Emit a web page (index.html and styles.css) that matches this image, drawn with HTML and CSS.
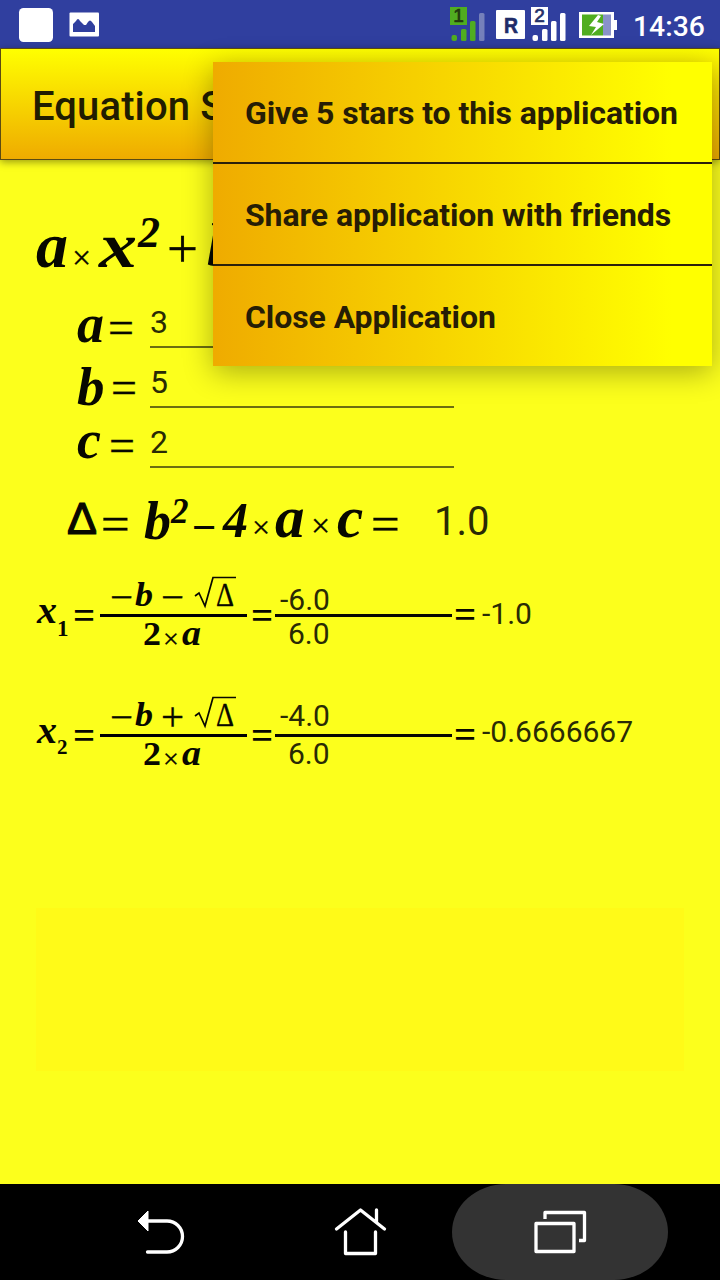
FILE: index.html
```html
<!DOCTYPE html>
<html lang="en">
<head>
<meta charset="utf-8">
<title>Equation Solver</title>
<link rel="stylesheet" href="styles.css">
</head>
<body>
<div class="screen">
  <header class="status">
    <svg class="status-left" width="110" height="48" viewBox="0 0 110 48">
      <rect x="19" y="8" width="34" height="34" rx="4.5" fill="#fff"/>
      <rect x="69.5" y="12.5" width="29.5" height="24" rx="1" fill="#fff"/>
      <path d="M73 32V24L76 21Q78 17 80 21L84 25H86L88 22Q90 19 92 22L95 26V32Z" fill="#303f9f"/>
    </svg>
    <svg class="status-right" width="180" height="48" viewBox="445 0 180 48">
      <rect x="450" y="7" width="17" height="18" fill="#50ad20"/>
      <text class="sim" x="458.5" y="22" fill="#22390f" stroke="#22390f">1</text>
      <g fill="#50ad20"><rect x="451.500" y="35" width="5.500" height="6" rx="2"/><rect x="461" y="29" width="5.500" height="12" rx="1.500"/><rect x="470" y="21" width="5.500" height="20" rx="1.500"/></g>
      <rect x="479" y="13" width="5.500" height="28" rx="1.500" fill="#7580ba"/>
      <rect x="496" y="10" width="29" height="29" rx="1" fill="#fff"/>
      <text class="roam" x="511" y="32.500" textLength="14" lengthAdjust="spacingAndGlyphs">R</text>
      <rect x="531" y="7" width="17" height="18" fill="#fff"/>
      <text class="sim" x="539.500" y="22" fill="#253169" stroke="#253169">2</text>
      <g fill="#fff"><rect x="532.500" y="35" width="5.500" height="6" rx="2"/><rect x="542" y="29" width="5.500" height="12" rx="1.500"/><rect x="551" y="21" width="5.500" height="20" rx="1.500"/><rect x="560" y="13" width="5.500" height="28" rx="1.500"/></g>
      <path d="M579 12H614V20H617V30H614V38H579Z" fill="#fff"/>
      <rect x="582" y="14.500" width="21" height="21" fill="#50ad20"/>
      <rect x="603" y="14.500" width="8" height="21" fill="#8992c9"/>
      <path d="M598 15L589 26L596 27L591 35L604 24L597 22L601 16Z" fill="#fff"/>
    </svg>
    <span class="clock">14:36</span>
  </header>

  <div class="appbar"><h1 class="title">Equation Solver</h1></div>

  <main class="content">
    <svg class="headline" width="400" height="90" viewBox="36 200 400 90">
      <g class="math">
        <text x="36" y="267" font-size="64">a</text>
        <text class="thin" x="72" y="269" font-size="34">×</text>
        <text x="99" y="267" font-size="64" textLength="38" lengthAdjust="spacingAndGlyphs">x</text>
        <text x="138" y="247" font-size="44">2</text>
        <text class="thin" x="167" y="267" font-size="55">+</text>
        <text x="207" y="266" font-size="62">b</text>
      </g>
    </svg>

    <div class="field">
      <svg width="114" height="60" viewBox="36 290 114 60"><g class="math"><text x="77" y="342" font-size="54">a</text><text class="thin" x="108" y="343" font-size="46">=</text></g></svg>
      <span class="entry">3</span>
    </div>
    <div class="field">
      <svg width="114" height="60" viewBox="36 350 114 60"><g class="math"><text x="77" y="405" font-size="55">b</text><text class="thin" x="111" y="403" font-size="46">=</text></g></svg>
      <span class="entry">5</span>
    </div>
    <div class="field">
      <svg width="114" height="60" viewBox="36 410 114 60"><g class="math"><text x="77" y="458" font-size="54">c</text><text class="thin" x="109" y="461" font-size="46">=</text></g></svg>
      <span class="entry">2</span>
    </div>

    <div class="delta">
      <svg width="398" height="80" viewBox="36 480 398 80">
        <g class="math">
          <text class="delta-sign" x="67" y="534" font-size="45" textLength="30" lengthAdjust="spacingAndGlyphs">Δ</text>
          <text class="thin" x="101" y="541" font-size="51">=</text>
          <text x="144" y="539" font-size="54">b</text>
          <text x="171" y="523" font-size="35">2</text>
          <text class="upright" x="192" y="542" font-size="43">−</text>
          <text x="223" y="537" font-size="50">4</text>
          <text class="thin" x="252" y="538" font-size="32">×</text>
          <text x="275" y="537" font-size="59">a</text>
          <text class="thin" x="311" y="537" font-size="34">×</text>
          <text x="337" y="537" font-size="59">c</text>
          <text class="thin" x="371" y="541" font-size="51">=</text>
        </g>
      </svg>
      <span class="delta-value">1.0</span>
    </div>

    <div class="root first">
      <svg width="239" height="100" viewBox="36 565 239 100">
        <g class="math">
          <text x="37" y="623" font-size="37" textLength="20" lengthAdjust="spacingAndGlyphs">x</text>
          <text class="upright" x="57" y="636" font-size="23">1</text>
          <text class="upright" x="73" y="629" font-size="39">=</text>
          <text class="thin" x="110" y="611" font-size="41">−</text>
          <text x="135" y="606" font-size="34" textLength="18" lengthAdjust="spacingAndGlyphs">b</text>
          <text class="thin" x="161" y="611" font-size="41">−</text>
          <text class="thin" x="216" y="606" font-size="34" textLength="18" lengthAdjust="spacingAndGlyphs">Δ</text>
          <text class="upright" x="143" y="645" font-size="33" textLength="18" lengthAdjust="spacingAndGlyphs">2</text>
          <text class="thin" x="163" y="648" font-size="28">×</text>
          <text x="182" y="645" font-size="35" textLength="19" lengthAdjust="spacingAndGlyphs">a</text>
          <text class="upright" x="251" y="629" font-size="39">=</text>
        </g>
        <path class="radical" d="M195 596L199 593L205 606L213 577.500H236"/>
        <rect x="100" y="614" width="147" height="3"/>
      </svg>
      <div class="fraction"><span class="numerator">-6.0</span><span class="denominator">6.0</span></div>
      <svg width="30" height="100" viewBox="452 565 30 100"><g class="math"><text class="upright" x="454" y="628" font-size="39">=</text></g></svg>
      <span class="result">-1.0</span>
    </div>

    <div class="root second">
      <svg width="239" height="100" viewBox="36 565 239 100">
        <g class="math">
          <text x="37" y="623" font-size="37" textLength="20" lengthAdjust="spacingAndGlyphs">x</text>
          <text class="upright" x="57" y="634" font-size="21">2</text>
          <text class="upright" x="73" y="629" font-size="39">=</text>
          <text class="thin" x="110" y="611" font-size="41">−</text>
          <text x="135" y="606" font-size="34" textLength="18" lengthAdjust="spacingAndGlyphs">b</text>
          <text class="thin" x="161" y="610" font-size="41">+</text>
          <text class="thin" x="216" y="606" font-size="34" textLength="18" lengthAdjust="spacingAndGlyphs">Δ</text>
          <text class="upright" x="143" y="645" font-size="33" textLength="18" lengthAdjust="spacingAndGlyphs">2</text>
          <text class="thin" x="163" y="648" font-size="28">×</text>
          <text x="182" y="645" font-size="35" textLength="19" lengthAdjust="spacingAndGlyphs">a</text>
          <text class="upright" x="251" y="629" font-size="39">=</text>
        </g>
        <path class="radical" d="M195 596L199 593L205 606L213 577.500H236"/>
        <rect x="100" y="614" width="147" height="3"/>
      </svg>
      <div class="fraction"><span class="numerator">-4.0</span><span class="denominator">6.0</span></div>
      <svg width="30" height="100" viewBox="452 565 30 100"><g class="math"><text class="upright" x="454" y="628" font-size="39">=</text></g></svg>
      <span class="result">-0.6666667</span>
    </div>

    <div class="banner"></div>
  </main>

  <nav class="navbar">
    <div class="nav-item"><svg width="60" height="60" viewBox="130 1202 60 60"><path d="M147 1221H167A15.500 15.500 0 0 1 167 1252H147.500" class="line"/><path d="M138 1221L148 1211V1231Z" fill="#fff" stroke="#fff" stroke-linejoin="round"/></svg></div>
    <div class="nav-item"><svg width="60" height="60" viewBox="330 1202 60 60"><path class="line" d="M336.500 1229L360.500 1210L384.500 1229M376.500 1210V1222M345.500 1232V1253.500H375.500V1232"/></svg></div>
    <div class="nav-item active"><svg width="60" height="60" viewBox="530 1202 60 60"><path class="line square" d="M536 1223.500H574V1251.500H536ZM545 1219V1212.500H584.500V1240.500H579"/></svg></div>
  </nav>

  <div class="menu">
    <div class="menu-item">Give 5 stars to this application</div>
    <div class="menu-item">Share application with friends</div>
    <div class="menu-item">Close Application</div>
  </div>
</div>
</body>
</html>
```
FILE: styles.css
```css
* { box-sizing: border-box; }
body { margin: 0; font-family: Roboto, sans-serif; color: #292a05; }
svg { display: block; flex: none; overflow: visible; }
.screen { position: relative; width: 720px; height: 1280px; overflow: hidden; display: flex; flex-direction: column; background: #fcff1c; }

.status { height: 48px; flex: none; display: flex; background: #303f9f; color: #fff; }
.status-right { margin-left: 335px; }
.clock { font-size: 28.3px; font-weight: 500; line-height: 53px; padding-left: 8px; }
.sim { font: 19px "Liberation Sans", sans-serif; text-anchor: middle; stroke-width: .7px; }
.roam { font: bold 22px "Liberation Sans", sans-serif; text-anchor: middle; fill: #202b68; stroke: #202b68; stroke-width: .6px; }

.appbar { height: 112px; flex: none; border: 1px solid #5b4b12; background: linear-gradient(#ffff00, #efab00); box-shadow: 0 2px 8px rgba(0, 0, 0, .4); padding: 5px 0 0 31px; }
.title { margin: 0; font-size: 40px; line-height: 106px; font-weight: 500; letter-spacing: .12px; color: #211d00; white-space: nowrap; }

.content { height: 1024px; flex: none; padding: 40px 36px 0; display: flex; flex-direction: column; }
.math { font-family: "Liberation Serif", serif; font-weight: bold; font-style: italic; fill: #080800; }
.thin { font-weight: normal; font-style: normal; stroke: #080800; stroke-width: .3px; }
.upright { font-style: normal; }
.delta-sign { font-family: "Liberation Sans", sans-serif; font-weight: normal; font-style: normal; stroke: #080800; stroke-width: 1.2px; }
.field { display: flex; height: 60px; flex: none; }
.entry { width: 304px; height: 58px; border-bottom: 2px solid #6c6d10; font-size: 32px; line-height: 43px; padding-top: 11px; }
.delta { display: flex; height: 80px; margin-top: 10px; flex: none; }
.delta-value { font-size: 40px; line-height: 84px; }
.root { display: flex; height: 100px; flex: none; font-size: 30px; }
.first { margin-top: 5px; }
.second { margin-top: 20px; }
.fraction { width: 177px; display: flex; flex-direction: column; }
.numerator { height: 52px; border-bottom: 3px solid #080800; padding: 17px 0 0 5px; line-height: 36px; }
.denominator { padding: 0 0 0 13px; line-height: 34px; }
.second .numerator { padding-top: 13px; }
.result { line-height: 98px; }
.second .result { line-height: 94px; }
.banner { height: 163px; flex: none; margin-top: 123px; background: #fffa18; }

.navbar { height: 96px; flex: none; display: flex; justify-content: center; background: #000; }
.nav-item { width: 200px; padding-top: 18px; display: flex; justify-content: center; }
.active { width: 216px; margin: 0 -8px; border-radius: 54px / 48px; background: #333; }
.line { fill: none; stroke: #fff; stroke-width: 3.3px; stroke-linecap: round; stroke-linejoin: round; }
.square { stroke-linecap: butt; }
.radical { fill: none; stroke: #080800; stroke-width: 1.7px; }

.menu { position: absolute; left: 213px; top: 62px; width: 499px; height: 304px; box-shadow: 0 6px 28px rgba(0, 0, 0, .32); background: linear-gradient(90deg, #efab00, #ffff00 92%); }
.menu-item { height: 102px; padding-left: 32px; border-bottom: 2px solid #2b200b; font-size: 32px; line-height: 102px; font-weight: 700; letter-spacing: -.08px; color: #261d05; white-space: nowrap; }
.menu-item:last-child { border-bottom: 0; }
```
